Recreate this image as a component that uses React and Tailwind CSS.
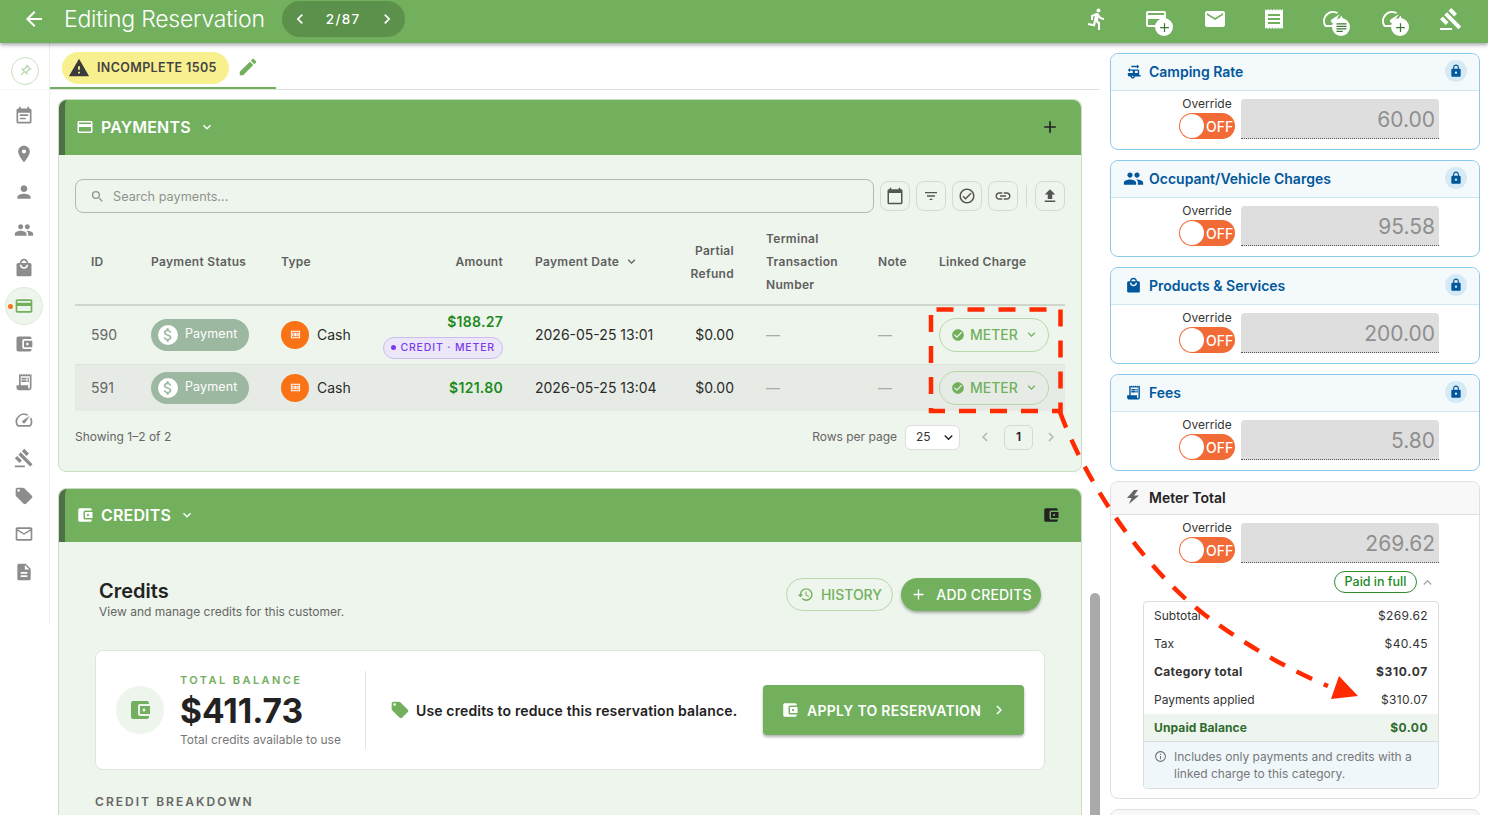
import {
  MdAccountBalanceWallet, MdAdd, MdArrowBack, MdAttachMoney, MdCalendarToday, MdCheckCircle, MdChevronLeft, MdChevronRight,
  MdCreditCard, MdDescription, MdDirectionsRun, MdEdit, MdEmail, MdEventNote, MdExpandLess, MdExpandMore, MdFileUpload,
  MdFilterList, MdGavel, MdHistory, MdInfoOutline, MdKeyboardArrowDown, MdLink, MdLocalMall, MdLocalOffer, MdLock,
  MdMailOutline, MdMoney, MdOutlineCheckCircle, MdOutlinePushPin, MdPeople, MdPerson, MdPlace, MdReceipt, MdReceiptLong, MdRvHookup,
  MdSearch, MdSpeed, MdWarning, MdOutlineCreditCard, MdSubject,
} from "react-icons/md";

function TopIcon({ icon: Icon, badge: Badge }) {
  return (
    <div className="relative flex h-7 items-center justify-center">
      <Icon className="text-white" size={24} />
      {Badge && (
        <span className="absolute right-[-5px] bottom-[-3px] flex h-[18px] w-[18px] items-center justify-center rounded-full bg-white">
          <Badge className="text-[#3c7a32]" size={15} />
        </span>
      )}
    </div>
  );
}

function Header() {
  return (
    <header className="relative z-20 flex h-[43px] items-center bg-[#72b05e] pb-[5px] pl-[22px] pr-[25px] shadow-[0_2px_4px_rgba(0,0,0,0.35)]">
      <MdArrowBack className="text-white" size={24} />
      <h1 className="ml-[18px] text-[23px] font-light tracking-[-0.01em] text-white">Editing Reservation</h1>
      <div className="ml-[17px] flex h-9 w-[123px] items-center justify-between rounded-full bg-[#5c914b] px-[8px] text-white">
        <MdChevronLeft size={20} />
        <span className="text-[13.5px] font-medium tracking-[0.1em]">2/87</span>
        <MdChevronRight size={20} />
      </div>
      <div className="ml-auto flex items-center gap-[35px]">
        <TopIcon icon={MdDirectionsRun} />
        <TopIcon icon={MdOutlineCreditCard} badge={MdAdd} />
        <TopIcon icon={MdEmail} />
        <TopIcon icon={MdReceipt} />
        <TopIcon icon={MdSpeed} badge={MdSubject} />
        <TopIcon icon={MdSpeed} badge={MdAdd} />
        <TopIcon icon={MdGavel} />
      </div>
    </header>
  );
}

const sideIcons = [MdEventNote, MdPlace, MdPerson, MdPeople, MdLocalMall, MdCreditCard, MdAccountBalanceWallet, MdReceiptLong, MdSpeed, MdGavel, MdLocalOffer, MdMailOutline, MdDescription];

function Sidebar() {
  return (
    <aside className="flex h-[581px] w-[50px] shrink-0 flex-col items-center border-r border-[#eeeeee]">
      <div className="flex h-[47px] w-full items-center justify-center border-b border-dotted border-[#eeeeee] pt-[10px]">
        <div className="flex h-7 w-7 items-center justify-center rounded-full border border-[#c9e0c2]">
          <MdOutlinePushPin className="rotate-45 text-[#b5d4ab]" size={14} />
        </div>
      </div>
      <div className="mt-[7px] flex flex-col items-center pr-[2px]">
        {sideIcons.map((Icon, i) =>
          i === 5 ? (
            <div key={i} className="relative flex h-[38px] w-[38px] items-center justify-center rounded-full border border-[#dcebd6] bg-[#eef5ec]">
              <span className="absolute left-[2px] top-[16px] h-[5px] w-[5px] rounded-full bg-[#f97316]" />
              <Icon className="text-[#72b05e]" size={20} />
            </div>
          ) : (
            <div key={i} className="flex h-[38px] w-[38px] items-center justify-center">
              <Icon className="text-[#8c8c8c]" size={20} />
            </div>
          )
        )}
      </div>
    </aside>
  );
}

function SectionHeader({ icon: Icon, title, right, h }) {
  return (
    <div className={`flex items-center rounded-t-lg border-l-[6px] border-[#4f7046] bg-[#72b05e] pb-[2px] pl-[11px] pr-[21px] text-white ${h}`}>
      <Icon size={18} />
      <span className="ml-[7px] text-[16px] font-semibold tracking-[0.01em]">{title}</span>
      <MdExpandMore className="ml-[8px]" size={16} />
      <div className="ml-auto">{right}</div>
    </div>
  );
}

function ToolButton({ icon: Icon, size = 18 }) {
  return (
    <button className="flex h-[30px] w-[30px] items-center justify-center rounded-lg border border-[#d3dbd0] text-[#555555]">
      <Icon size={size} />
    </button>
  );
}

function PaymentRow({ id, amount, date, credit, last }) {
  return (
    <tr className={last ? "h-[47px] bg-[#e6ece5]" : "h-[59px] border-b border-[#dde3da]"}>
      <td className="pl-4 text-[14px] text-[#666666]">{id}</td>
      <td className="pl-4">
        <span className="flex h-8 w-[98px] items-center gap-[7px] rounded-full bg-[#9cb8a1] pl-[7px] text-[12.5px] tracking-[0.01em] text-white">
          <span className="flex h-5 w-5 items-center justify-center rounded-full bg-white">
            <MdAttachMoney className="text-[#9cb8a1]" size={18} />
          </span>
          Payment
        </span>
      </td>
      <td className="pl-4">
        <span className="flex items-center gap-[8px] text-[14px] text-[#2a2a2a]">
          <span className="flex h-7 w-7 items-center justify-center rounded-full bg-[#f97316]">
            <MdMoney className="text-white" size={11} />
          </span>
          Cash
        </span>
      </td>
      <td className="pr-4 text-right">
        <div className="text-[14px] font-semibold tracking-[0.02em] text-[#1e8a1e]">{amount}</div>
        {credit && (
          <span className="mt-[3px] inline-flex h-[22px] items-center gap-[4px] rounded-full border border-[#cdbcf0] bg-[#ebe6f8] px-[7px] text-[10.5px] font-medium tracking-[0.08em] text-[#7c3aed]">
            <span className="h-[5px] w-[5px] rounded-sm bg-[#7c3aed]" />
            CREDIT · METER
          </span>
        )}
      </td>
      <td className="pl-4 text-[14px] text-[#2a2a2a]">{date}</td>
      <td className="pr-4 text-right text-[14px] text-[#2a2a2a]">$0.00</td>
      <td className="pl-4 text-[14px] text-[#aaaaaa]">—</td>
      <td className="pl-4 text-[14px] text-[#aaaaaa]">—</td>
      <td className="pl-4">
        <span className="flex h-[34px] w-[110px] items-center rounded-full border border-[#b6d8ab] pl-[11px] text-[14px] font-medium text-[#72b05e]">
          <MdCheckCircle size={14} />
          <span className="ml-[5px]">METER</span>
          <MdExpandMore className="ml-[6px]" size={15} />
        </span>
      </td>
    </tr>
  );
}

const th = "pb-[6px] text-[12px] font-semibold leading-[23px] tracking-[0.025em] text-[#5f5f5f]";

function Payments() {
  return (
    <section className="rounded-lg border border-[#c9dfc3] bg-[#eef5ec]">
      <SectionHeader icon={MdCreditCard} title="PAYMENTS" h="h-[55px]" right={<MdAdd size={20} className="text-[#222222]" />} />
      <div className="px-4 pt-6 pb-0">
        <div className="flex items-center gap-[6px]">
          <div className="flex h-[34px] w-[799px] items-center gap-2 rounded-lg border border-[#b4b9b2] pl-[14px] pt-px text-[12.7px] text-[#8e948d]">
            <MdSearch size={15} />
            Search payments...
          </div>
          <ToolButton icon={MdCalendarToday} />
          <ToolButton icon={MdFilterList} size={16} />
          <ToolButton icon={MdOutlineCheckCircle} />
          <ToolButton icon={MdLink} />
          <span className="mx-[2px] h-[22px] w-px bg-[#d3dbd0]" />
          <ToolButton icon={MdFileUpload} />
        </div>
        <table className="mt-[12px] w-[990px] table-fixed border-collapse">
          <colgroup>
            <col className="w-[60px]" />
            <col className="w-[130px]" />
            <col className="w-[102px]" />
            <col className="w-[152px]" />
            <col className="w-[147px]" />
            <col className="w-[84px]" />
            <col className="w-[112px]" />
            <col className="w-[61px]" />
            <col className="w-[142px]" />
          </colgroup>
          <thead>
            <tr className="h-[80px] border-b-2 border-[#cfd6cc]">
              <th className={`${th} pl-4 text-left`}>ID</th>
              <th className={`${th} pl-4 text-left`}>Payment Status</th>
              <th className={`${th} pl-4 text-left`}>Type</th>
              <th className={`${th} pr-4 text-right`}>Amount</th>
              <th className={`${th} pl-4 text-left`}>
                <span className="flex items-center gap-[5px]">Payment Date <MdKeyboardArrowDown size={15} /></span>
              </th>
              <th className={`${th} pr-4 text-right`}>Partial Refund</th>
              <th className={`${th} pl-4 text-left`}>Terminal Transaction Number</th>
              <th className={`${th} pl-4 text-left`}>Note</th>
              <th className={`${th} pl-4 text-left`}>Linked Charge</th>
            </tr>
          </thead>
          <tbody>
            <PaymentRow id="590" amount="$188.27" date="2026-05-25 13:01" credit />
            <PaymentRow id="591" amount="$121.80" date="2026-05-25 13:04" last />
          </tbody>
        </table>
        <div className="mt-[13px] flex h-[26px] items-center text-[12px] text-[#666666]">
          <span>Showing 1–2 of 2</span>
          <span className="ml-auto">Rows per page</span>
          <span className="ml-2 flex h-[25px] w-[55px] items-center justify-between rounded-md border border-[#dddddd] bg-white pl-[10px] pr-[2px] text-[#333333]">
            25 <MdKeyboardArrowDown className="text-[#222222]" size={17} />
          </span>
          <MdChevronLeft className="ml-[16px] text-[#b5b5b5]" size={18} />
          <span className="ml-[10px] flex h-[25px] w-[29px] items-center justify-center rounded-md border border-[#d3dbd0] font-semibold text-[#222222]">1</span>
          <MdChevronRight className="ml-[9px] mr-[5px] text-[#b5b5b5]" size={18} />
        </div>
        <div className="h-[21px]" />
      </div>
    </section>
  );
}

function Credits() {
  return (
    <section className="mt-[16px] rounded-t-lg border border-[#c9dfc3] bg-[#eef5ec]">
      <SectionHeader icon={MdAccountBalanceWallet} title="CREDITS" h="h-[53px]" right={<MdAccountBalanceWallet size={18} className="text-[#222222]" />} />
      <div className="px-9 pb-10 pt-[36px]">
        <div className="flex items-start justify-between pl-1 pr-[4px]">
          <div className="pt-px">
            <h2 className="text-[20px] font-semibold leading-[25px] text-[#222222]">Credits</h2>
            <p className="text-[12px] leading-[15px] text-[#666666]">View and manage credits for this customer.</p>
          </div>
          <div className="flex gap-2">
            <button className="flex h-[33px] w-[107px] items-center justify-center gap-[7px] rounded-full border border-[#b6d8ab] text-[14px] font-medium text-[#72b05e]">
              <MdHistory size={17} /> HISTORY
            </button>
            <button className="flex h-[33px] w-[140px] items-center justify-center gap-[9px] rounded-full bg-[#72b05e] text-[14px] font-medium tracking-[0.01em] text-white shadow-[0_2px_3px_rgba(0,0,0,0.3)]">
              <MdAdd size={17} /> ADD CREDITS
            </button>
          </div>
        </div>
        <div className="mt-[31px] flex h-[120px] items-center rounded-lg border border-[#e2e4e1] bg-white pl-5 pr-5">
          <div className="flex h-12 w-12 items-center justify-center rounded-full bg-[#eef5ec]">
            <MdAccountBalanceWallet className="text-[#72b05e]" size={24} />
          </div>
          <div className="ml-4 w-[185px]">
            <div className="text-[11px] font-semibold leading-[14px] tracking-[0.22em] text-[#72b05e]">TOTAL BALANCE</div>
            <div className="mt-[4px] text-[33.5px] font-bold leading-[40px] text-[#222222]">$411.73</div>
            <div className="text-[12px] leading-[17px] text-[#777777]">Total credits available to use</div>
          </div>
          <span className="h-[78px] w-px bg-[#e2e4e1]" />
          <MdLocalOffer className="ml-[24px] text-[#72b05e]" size={20} />
          <span className="ml-[6px] text-[14px] font-semibold tracking-[0.01em] text-[#222222]">Use credits to reduce this reservation balance.</span>
          <button className="ml-auto flex h-[50px] w-[261px] items-center rounded bg-[#72b05e] pl-[18px] text-[14px] font-semibold text-white shadow-[0_2px_3px_rgba(0,0,0,0.3)]">
            <MdAccountBalanceWallet size={18} />
            <span className="ml-[8px] tracking-[0.02em]">APPLY TO RESERVATION</span>
            <MdChevronRight className="ml-[9px]" size={18} />
          </button>
        </div>
        <div className="mt-[23px] text-[12px] font-semibold tracking-[0.17em] text-[#666666]">CREDIT BREAKDOWN</div>
      </div>
    </section>
  );
}

function OverrideRow({ value }) {
  return (
    <div className="flex items-start pl-[68px]">
      <div className="flex w-[56px] flex-col items-center">
        <span className="text-[12px] leading-[10px] text-[#333333]">Override</span>
        <span className="mt-[4px] flex h-[26px] w-[56px] items-center rounded-full bg-[#f26a36]">
          <span className="h-6 w-6 shrink-0 translate-x-px rounded-full bg-white" />
          <span className="ml-[3px] text-[14px] font-medium text-white">OFF</span>
        </span>
      </div>
      <div className="ml-[6px] flex h-10 w-[198px] items-center justify-end rounded-t border-b border-dotted border-[#555555] bg-[#dedede] pr-1 pt-[2px] text-[21px] text-[#8f8f8f]">
        {value}
      </div>
    </div>
  );
}

function RateCard({ icon: Icon, iconSize = 17, title, value }) {
  return (
    <div className="h-[97px] rounded-lg border border-[#8ccaea] bg-white">
      <div className="flex h-[37px] items-center rounded-t-lg border-b border-[#cfe6f3] bg-[#f4f9fc] pb-[2px] pl-[14px] pr-[12px]">
        <span className="flex w-[17px] justify-center"><Icon className="shrink-0 text-[#01579b]" size={iconSize} /></span>
        <span className="ml-[7px] text-[14px] font-semibold text-[#01579b]">{title}</span>
        <span className="ml-auto flex h-[22px] w-[22px] items-center justify-center rounded-full bg-[#d6eaf5]">
          <MdLock className="text-[#01579b]" size={14} />
        </span>
      </div>
      <div className="pt-[8px]"><OverrideRow value={value} /></div>
    </div>
  );
}

function Line({ label, value, bold }) {
  return (
    <div className={`flex h-[28px] items-center justify-between px-[10px] text-[12px] text-[#333333] ${bold ? "font-bold tracking-[0.03em] text-[#222222]" : ""}`}>
      <span>{label}</span>
      <span className={bold ? "tracking-[0.06em]" : "tracking-[0.03em]"}>{value}</span>
    </div>
  );
}

function MeterCard() {
  return (
    <div className="h-[318px] rounded-lg border border-[#e0e0e0] bg-white">
      <div className="flex h-[33px] items-center rounded-t-lg border-b border-[#e0e0e0] bg-[#f8f8f8] pb-[2px] pl-[15px]">
        <svg width="14" height="14" viewBox="0 0 14 14" className="text-[#666666]">
          <path d="M8 0 L1 8 H5.5 L3 14 L13 5.5 H8 L12 0 Z" fill="currentColor" />
        </svg>
        <span className="ml-[9px] text-[14px] font-semibold text-[#222222]">Meter Total</span>
      </div>
      <div className="pt-[8px]"><OverrideRow value="269.62" /></div>
      <div className="mt-[8px] flex items-center pl-[223px]">
        <span className="flex h-[22px] w-[83px] items-center justify-center rounded-full border border-[#2e8b2e] text-[12.5px] font-medium text-[#1e8a1e]">Paid in full</span>
        <MdExpandLess className="ml-[2px] text-[#aaaaaa]" size={17} />
      </div>
      <div className="ml-[32px] mt-[8px] w-[296px] overflow-hidden rounded border border-[#dddddd]">
        <Line label="Subtotal" value="$269.62" />
        <Line label="Tax" value="$40.45" />
        <Line label="Category total" value="$310.07" bold />
        <Line label="Payments applied" value="$310.07" />
        <div className="flex h-[28px] items-center justify-between border-b border-[#dddddd] bg-[#eef4ee] px-[10px] text-[12px] font-bold tracking-[0.01em] text-[#2e6b2e]">
          <span>Unpaid Balance</span>
          <span className="tracking-[0.04em]">$0.00</span>
        </div>
        <div className="flex gap-[7px] bg-[#f0f7fb] px-[10px] pt-[6px] pb-[6px] text-[12px] leading-[17px] text-[#777777]">
          <MdInfoOutline className="mt-[2px] shrink-0" size={13} />
          <span>Includes only payments and credits with a linked charge to this category.</span>
        </div>
      </div>
    </div>
  );
}

function Annotation() {
  return (
    <svg className="pointer-events-none absolute left-0 top-0 z-30" width="1488" height="815" viewBox="0 0 1488 815" fill="none">
      <rect x="931" y="309.5" width="129.5" height="101.5" stroke="#ff2a00" strokeWidth="4.5" strokeDasharray="17 14" strokeDashoffset="-5.5" />
      <path d="M1060 412 C1085 480 1140 565 1205 615 C1250 648 1290 670 1328 686" stroke="#ff2a00" strokeWidth="4.5" strokeDasharray="17 13" />
      <path d="M1339 676 L1358 696 L1331 699 Z" fill="#ff2a00" />
    </svg>
  );
}

export default function App() {
  return (
    <div className="relative h-[815px] w-[1488px] overflow-hidden bg-white font-[Inter,sans-serif]">
      <Header />
      <div className="flex">
        <Sidebar />
        <main className="w-[1050px] shrink-0">
          <div className="flex h-[47px] border-b border-[#e0e0e0]">
            <div className="flex h-[46px] w-[226px] items-center gap-[8px] border-b-2 border-[#72b05e] pl-[12px] pt-[6px]">
              <span className="flex h-8 w-[167px] items-center gap-[7px] rounded-full bg-[#f8f08e] pl-[6px] text-[12.5px] font-semibold tracking-[0.03em] text-[#444444]">
                <MdWarning className="text-[#3a3a3a]" size={22} />
                INCOMPLETE 1505
              </span>
              <MdEdit className="-mt-[3px] text-[#72b05e]" size={22} />
            </div>
          </div>
          <div className="pl-2 pr-[18px] pt-[9px]">
            <Payments />
            <Credits />
          </div>
        </main>
        <div className="flex w-[388px] flex-col gap-[10px] pl-[10px] pr-2 pt-[10px]">
          <RateCard icon={MdRvHookup} title="Camping Rate" value="60.00" />
          <RateCard icon={MdPeople} iconSize={21} title="Occupant/Vehicle Charges" value="95.58" />
          <RateCard icon={MdLocalMall} title="Products & Services" value="200.00" />
          <RateCard icon={MdReceiptLong} title="Fees" value="5.80" />
          <MeterCard />
          <div className="h-10 rounded-t-lg border border-[#e0e0e0] bg-[#f8f8f8]" />
        </div>
      </div>
      <div className="absolute left-[1090px] top-[593px] h-[222px] w-[10px] rounded-t-full bg-[#aaaaaa]" />
      <Annotation />
    </div>
  );
}
